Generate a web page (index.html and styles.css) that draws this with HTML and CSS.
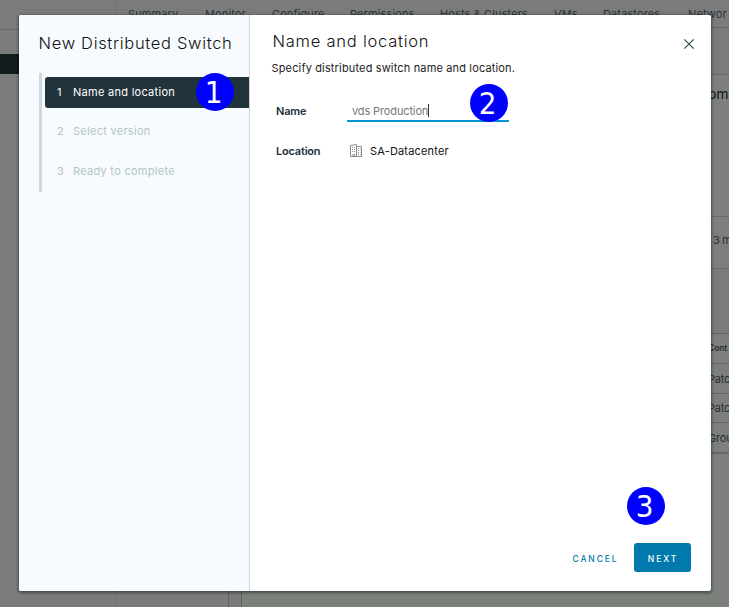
FILE: index.html
```html
<!DOCTYPE html>
<html lang="en">
<head>
<meta charset="utf-8">
<title>New Distributed Switch</title>
<link rel="stylesheet" href="styles.css">
</head>
<body>
<div class="app">
  <aside class="tree"><div class="tree-head"></div><div class="tree-selected"></div></aside>
  <main class="main">
    <nav class="tabs"><span class="t1">Summary</span><span class="t2">Monitor</span><span class="t3">Configure</span><span class="t4">Permissions</span><span class="t5">Hosts &amp; Clusters</span><span class="t6">VMs</span><span class="t7">Datastores</span><span class="t8">Networ</span></nav>
    <div class="content">
      <div class="pane"></div><div class="gutter"></div>
      <section class="details">
        <div class="toolbar"></div>
        <div class="title">om</div>
        <div class="info">3 m</div>
        <div class="blank"></div>
        <div class="row head">Cont</div>
        <div class="row">Patc</div>
        <div class="row short">Patc</div>
        <div class="row last">Grou</div>
      </section>
    </div>
  </main>
</div>
<div class="modal" role="dialog">
  <aside class="wizard">
    <h1>New Distributed Switch</h1>
    <ol class="steps">
      <li class="active"><span class="num">1</span><span>Name and location</span></li>
      <li><span class="num">2</span><span>Select version</span></li>
      <li><span class="num">3</span><span>Ready to complete</span></li>
    </ol>
  </aside>
  <section class="page">
    <header>
      <h2>Name and location</h2>
      <svg class="close" viewBox="0 0 12 12"><path d="M1.3 1.3 10.7 10.7M10.7 1.3 1.3 10.7"/></svg>
    </header>
    <p class="intro">Specify distributed switch name and location.</p>
    <div class="field"><label>Name</label><div class="input"><span>vds Production</span><i class="caret"></i></div></div>
    <div class="field location"><label>Location</label>
      <svg class="dc" viewBox="0 0 12 13"><path d="M.5 12.5V1.5L6.5.5V12.5M6.5 2.5H11.5V12.5M0 12.5H12M3 12.5V10.5H4.5V12.5"/><path class="windows" d="M2 3.5H5.5M2 5.5H5.5M2 7.5H5.5M8 4.5H10.5M8 6.5H10.5M8 8.5H10.5M8 10.5H10.5"/></svg>
      <span class="value">SA-Datacenter</span></div>
    <footer><button class="cancel">CANCEL</button><button class="next">NEXT</button></footer>
  </section>
</div>
<span class="marker m1">1</span><span class="marker m2">2</span><span class="marker m3">3</span>
</body>
</html>
```
FILE: styles.css
```css
* { box-sizing: border-box; }
body { margin: 0; width: 729px; height: 607px; overflow: hidden; position: relative; font: 11px/16px Inter, sans-serif; color: #222; background: #7b7b7b; }
h1, h2, p, ol { margin: 0; padding: 0; font-weight: 400; }
span, label { white-space: nowrap; }
.app { display: flex; height: 607px; background: #7b7b7b; }
.tree { width: 117px; border-right: 3px solid #737b78; }
.tree-head { height: 30px; border-bottom: 1px solid #656969; }
.tree-selected { margin-top: 24px; height: 20px; background: #111b1d; }
.main { flex: 1; min-width: 0; display: flex; flex-direction: column; }
.tabs { height: 28px; padding: 6px 0 0 11px; display: flex; border-bottom: 1px solid #656969; color: #283538; letter-spacing: .12px; }
.tabs span { flex: none; }
.t1 { width: 77px; } .t2 { width: 67px; } .t3 { width: 78px; }
.t4 { width: 90px; } .t5 { width: 114px; } .t6 { width: 49px; } .t7 { width: 85px; }
.content { flex: 1; display: flex; }
.pane { width: 112px; border-right: 1px solid #5e6361; }
.gutter { width: 13px; border-right: 1px solid #5e5e5a; }
.details { flex: 1; min-width: 0; background: #7b807b; white-space: nowrap; color: #2b2f31; }
.toolbar { height: 47px; background: #7b7b7b; border-bottom: 1px solid #656969; }
.title { height: 142px; padding: 10px 0 0 466px; font-size: 14px; line-height: 18px; letter-spacing: -.2px; color: #151819; border-bottom: 1px solid #686c69; }
.info { height: 52px; padding: 15px 0 0 471px; letter-spacing: -.4px; border-bottom: 1px solid #686c69; }
.blank { height: 65px; background: #7b7b7b; border-bottom: 1px solid #5f6361; }
.row { height: 30px; padding: 7px 0 0 466px; letter-spacing: -.2px; border-bottom: 1px solid #656966; }
.head { padding-top: 6px; font-size: 8.5px; font-weight: 600; letter-spacing: -.1px; }
.short { height: 29px; padding-top: 6px; }
.last { height: 31px; border-bottom-width: 2px; }
.modal { position: absolute; left: 19px; top: 15px; width: 692px; height: 576px; display: flex; background: #fff; border-radius: 2px; overflow: hidden; box-shadow: 0 1px 3px 1px rgba(0,0,0,.4); }
.wizard { width: 231px; padding: 16px 0 0 20px; background: #f7fbff; border-right: 1px solid #ccd4da; }
h1 { font-size: 16.5px; line-height: 25px; font-weight: 300; letter-spacing: .68px; text-indent: -.5px; color: #111; white-space: nowrap; }
.steps { list-style: none; margin-top: 17px; height: 119px; padding: 4px 0 0 3px; border-left: 3px solid #ccd8da; letter-spacing: .28px; }
.steps li { display: flex; align-items: center; height: 31px; padding: 0 0 2px 12px; margin-bottom: 9px; color: #b4c4c6; }
.steps .active { color: #fff; background: #21333b; border-radius: 3px 0 0 3px; margin-bottom: 8px; }
.num { width: 16px; }
.page { flex: 1; min-width: 0; display: flex; flex-direction: column; padding: 14px 20px 19px 22px; }
header { display: flex; justify-content: space-between; height: 25px; padding-left: 1px; }
h2 { font-size: 16.5px; line-height: 25px; font-weight: 300; letter-spacing: .76px; text-indent: -.5px; color: #111; white-space: nowrap; }
.close { width: 12px; height: 12px; margin: 9px -4px 0 0; fill: none; stroke: #314b50; stroke-width: 1.2; }
.intro { margin-top: 6px; line-height: 16px; letter-spacing: .15px; text-indent: -.5px; white-space: nowrap; }
.field { display: flex; margin-top: 23px; padding-left: 4px; height: 24px; }
label { width: 71px; padding-top: 4px; line-height: 16px; font-weight: 600; letter-spacing: -.2px; color: #21333b; }
.input { display: flex; width: 162px; height: 23px; padding: 4px 0 0 5px; letter-spacing: -.13px; border-bottom: 2px solid #0095d3; color: #777; }
.caret { width: 1px; height: 13px; margin-top: 1px; background: #333; }
.location { margin-top: 16px; }
.dc { width: 12px; height: 13px; margin: 5px 8px 0 3px; fill: none; stroke: #818181; stroke-width: .9; }
.windows { stroke-dasharray: 1 1; }
.value { line-height: 24px; letter-spacing: .18px; color: #111; }
footer { display: flex; justify-content: flex-end; margin-top: auto; }
button { border: 0; padding: 2px 0 0; height: 29px; font: 500 8.5px Inter, sans-serif; letter-spacing: 1.9px; border-radius: 3px; }
.cancel { width: 62px; margin-right: 8px; padding-left: 1px; color: #0079ad; background: none; }
.next { width: 57px; padding-left: 1px; color: #fff; background: #0079ad; }
.marker { position: absolute; width: 38px; height: 38px; padding-right: 3px; border-radius: 50%; background: #00f; color: #fff; font: 31px/39px "DejaVu Sans Condensed", "DejaVu Sans", sans-serif; font-stretch: condensed; text-align: center; }
.m1 { left: 196px; top: 73px; } .m2 { left: 470px; top: 84px; } .m3 { left: 627px; top: 487px; }
```
